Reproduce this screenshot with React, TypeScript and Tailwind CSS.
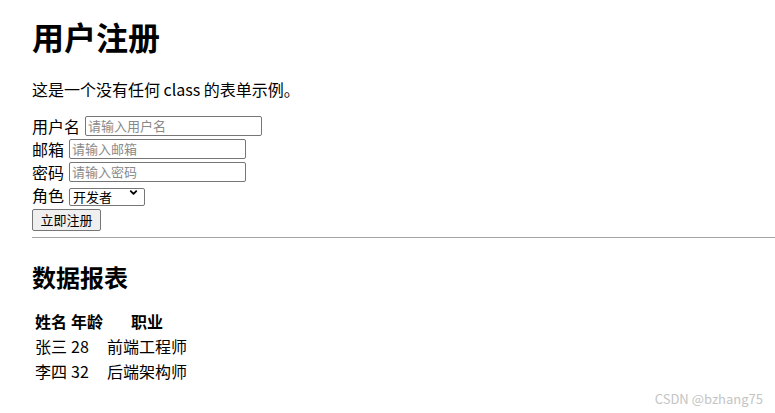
import { ChevronDown } from "lucide-react";

const rows = [
  { name: "张三", age: "28", job: "前端工程师" },
  { name: "李四", age: "32", job: "后端架构师" },
];

const font = "font-['Noto_Sans_CJK_SC','Noto_Sans',sans-serif]";

function Field({ label, placeholder, width }: { label: string; placeholder: string; width: string }) {
  return (
    <div className="flex h-[23px] items-center gap-[5px]">
      <label className="text-[16px] leading-[20px]">{label}</label>
      <input
        type="text"
        placeholder={placeholder}
        className={`h-[20px] ${width} rounded-[2px] border border-[#767676] bg-white px-[2px] text-[13px] leading-[16px] placeholder-[#8a8a8a] outline-none`}
      />
    </div>
  );
}

export default function App() {
  return (
    <div className={`relative h-[413px] w-[775px] overflow-hidden bg-white pl-8 text-black ${font}`}>
      <h1 className="mt-4 text-[32px] font-bold leading-[40px]">用户注册</h1>
      <p className="mt-[22px] text-[16px] leading-[22px]">这是一个没有任何 class 的表单示例。</p>

      <form className="mt-[14px]" onSubmit={(e) => e.preventDefault()}>
        <Field label="用户名" placeholder="请输入用户名" width="w-[177px]" />
        <Field label="邮箱" placeholder="请输入邮箱" width="w-[177px]" />
        <Field label="密码" placeholder="请输入密码" width="w-[177px]" />
        <div className="flex h-[23px] items-center gap-[5px]">
          <label className="text-[16px] leading-[20px]">角色</label>
          <div className="relative">
            <select className="h-[18px] w-[76px] appearance-none rounded-[2px] border border-[#767676] bg-white pl-[3px] text-[13px] leading-[16px] outline-none">
              <option>开发者</option>
              <option>设计师</option>
            </select>
            <ChevronDown
              size={11}
              strokeWidth={4}
              className="pointer-events-none absolute right-[6px] top-[4px]"
            />
          </div>
        </div>
        <button
          type="submit"
          className="h-[22px] w-[69px] rounded-[2px] border border-[#767676] bg-[#efefef] text-[13px] leading-[18px]"
        >
          立即注册
        </button>
      </form>

      <hr className="mt-[6px] border-t border-[#a3a3a3]" />

      <h2 className="mt-[24px] text-[24px] font-bold leading-[30px]">数据报表</h2>

      <table className="mt-[16px] border-separate border-spacing-[2px] text-[16px] leading-[21px]">
        <thead>
          <tr>
            <th className="p-[1px] font-bold">姓名</th>
            <th className="p-[1px] font-bold">年龄</th>
            <th className="p-[1px] font-bold">职业</th>
          </tr>
        </thead>
        <tbody>
          {rows.map((r) => (
            <tr key={r.name}>
              <td className="p-[1px]">{r.name}</td>
              <td className="p-[1px]">{r.age}</td>
              <td className="p-[1px]">{r.job}</td>
            </tr>
          ))}
        </tbody>
      </table>

      <div className="absolute bottom-[6px] right-[12px] text-[13px] leading-[16px] text-[#c4c4c4]">
        CSDN @bzhang75
      </div>
    </div>
  );
}
